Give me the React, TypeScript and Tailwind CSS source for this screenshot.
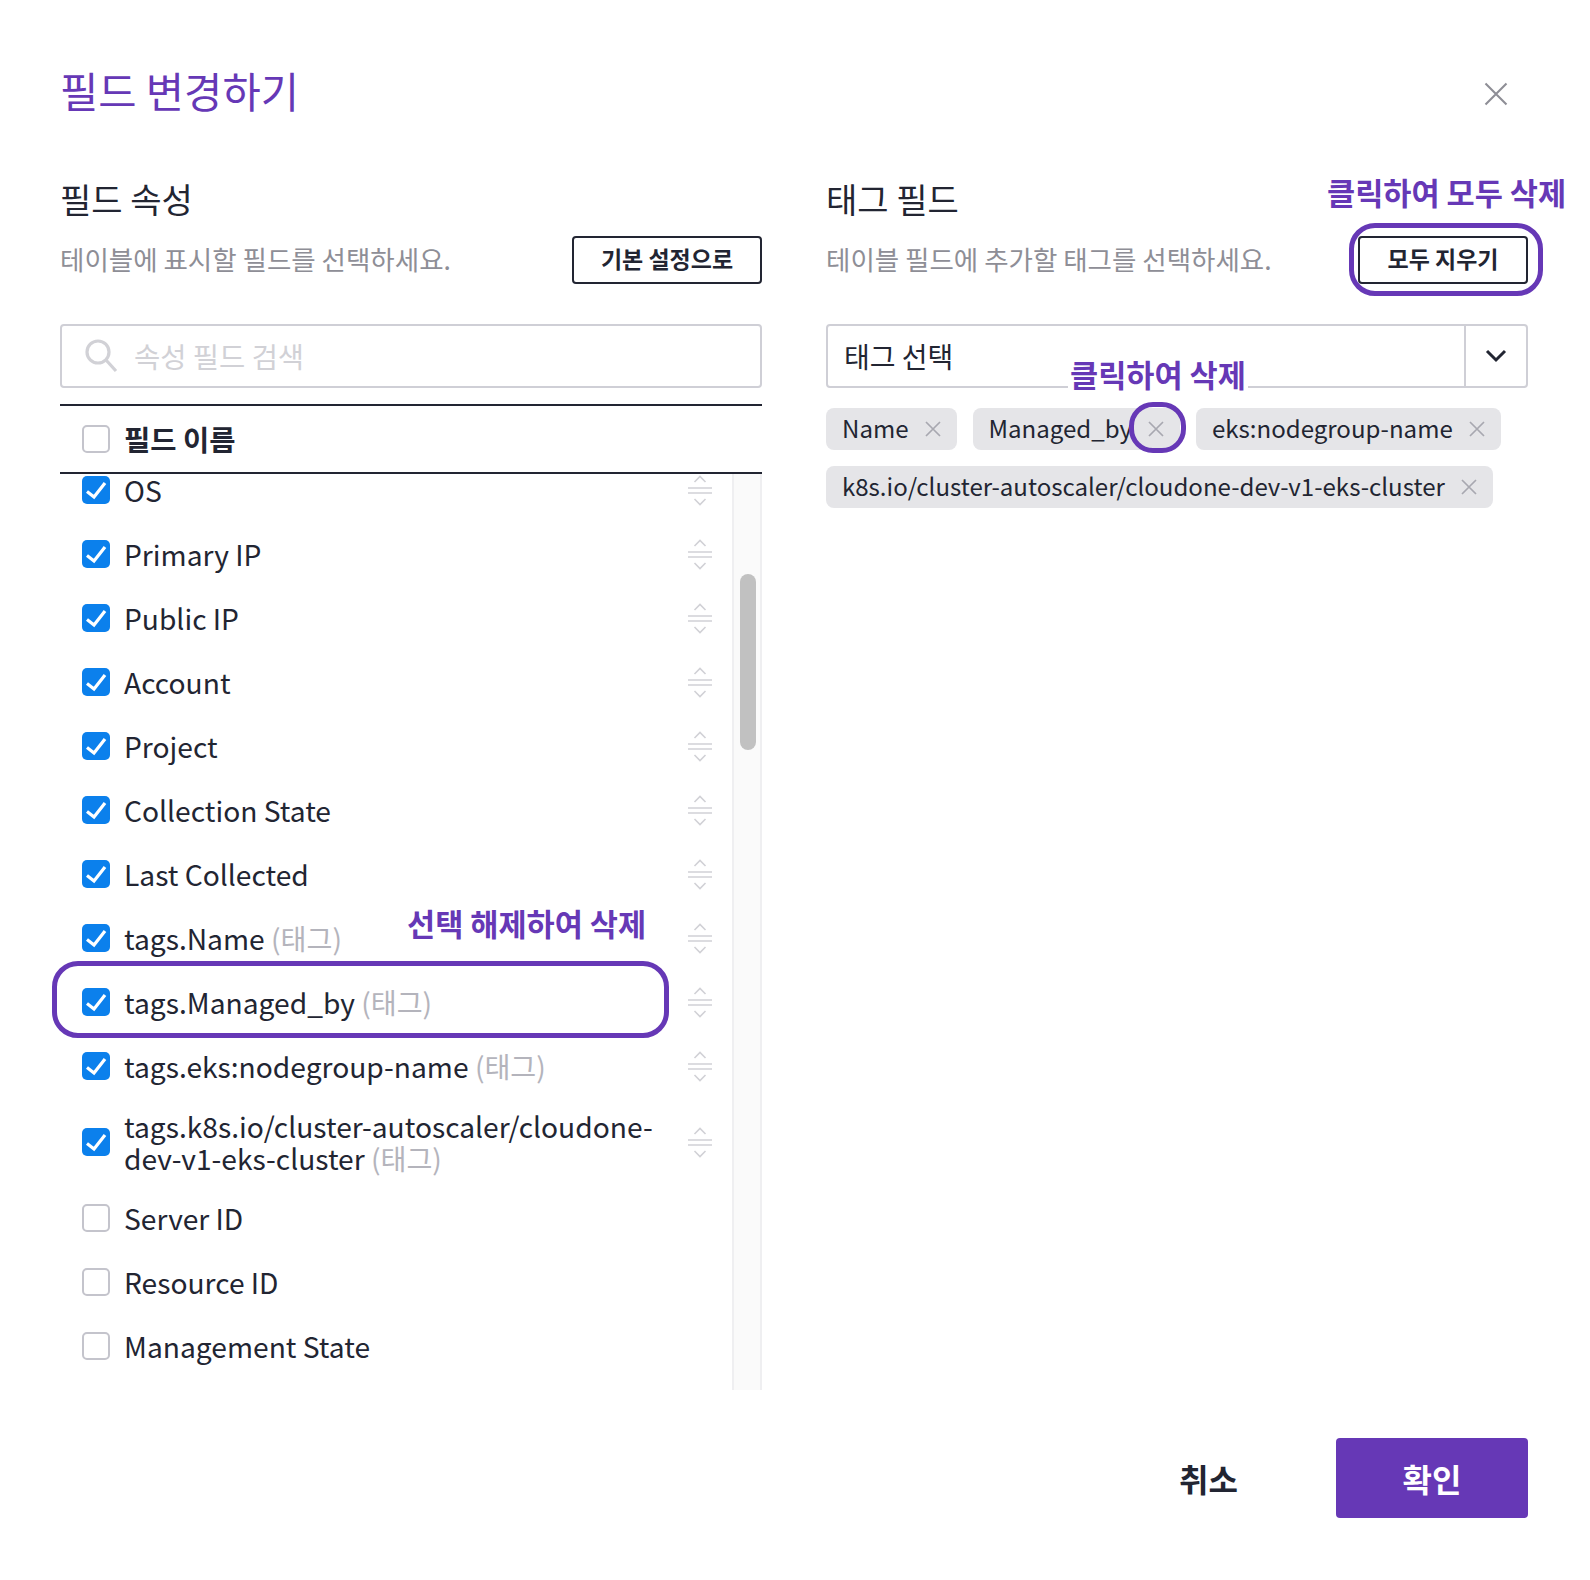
import React from "react";

const FONT = "font-['Noto_Sans_CJK_KR','Noto_Sans',sans-serif]";

type Row = { name: string; tag?: boolean; on: boolean; tall?: boolean };
const rows: Row[] = [
  { name: "OS", on: true },
  { name: "Primary IP", on: true },
  { name: "Public IP", on: true },
  { name: "Account", on: true },
  { name: "Project", on: true },
  { name: "Collection State", on: true },
  { name: "Last Collected", on: true },
  { name: "tags.Name", tag: true, on: true },
  { name: "tags.Managed_by", tag: true, on: true },
  { name: "tags.eks:nodegroup-name", tag: true, on: true },
  { name: "tags.k8s.io/cluster-autoscaler/cloudone-dev-v1-eks-cluster", tag: true, on: true, tall: true },
  { name: "Server ID", on: false },
  { name: "Resource ID", on: false },
  { name: "Management State", on: false },
];

function Check({ on }: { on: boolean }) {
  if (!on) {
    return <span className="block w-[28px] h-[28px] shrink-0 rounded-[5px] border-2 border-[#c4c4cc] bg-white" />;
  }
  return (
    <span className="flex items-center justify-center w-[28px] h-[28px] shrink-0 rounded-[5px] bg-[#0b80ec]">
      <svg width="28" height="28" viewBox="0 0 28 28" fill="none">
        <path d="M5 15.5 L12 21 L23 7" stroke="#fff" strokeWidth="3.2" />
      </svg>
    </span>
  );
}

function Drag() {
  return (
    <svg width="26" height="31" viewBox="0 0 26 31" fill="none" stroke="#d1d1d6" strokeWidth="1.6" className="shrink-0">
      <path d="M7.5 7 L13 1.5 L18.5 7" />
      <path d="M1 13 H25 M1 18 H25" />
      <path d="M7.5 24 L13 29.5 L18.5 24" />
    </svg>
  );
}

function X({ size = 16, color = "#a8a8b0", w = 1.7 }: { size?: number; color?: string; w?: number }) {
  return (
    <svg width={size} height={size} viewBox="0 0 16 16" fill="none" stroke={color} strokeWidth={w} className="shrink-0">
      <path d="M1 1 L15 15 M15 1 L1 15" />
    </svg>
  );
}

function Chip({ label }: { label: string }) {
  return (
    <span className="flex items-center h-[42px] pl-[16px] pr-[16px] gap-[16px] rounded-[8px] bg-[#e5e5e8] text-[24.05px] leading-none text-[#222532] whitespace-nowrap">
      <span className="-mt-[2px]">{label}</span>
      <X />
    </span>
  );
}

const Note = ({ className, children }: { className: string; children: React.ReactNode }) => (
  <span className={`absolute bg-white text-[30.6px] leading-[36px] font-bold text-[#6638b6] whitespace-nowrap ${className}`}>{children}</span>
);

export default function App() {
  return (
    <div className={`relative w-[1590px] h-[1580px] bg-white px-[62px] overflow-hidden text-[#222532] ${FONT}`}>
      <div className="flex items-center justify-between h-[184px]">
        <h1 className="text-[41.6px] leading-[56px] font-normal text-[#6638b6] -mt-[5px] ml-[-2px]">필드 변경하기</h1>
        <span className="pr-[20px] mt-[3px]">
          <X size={24} color="#8e8e96" w={1.4} />
        </span>
      </div>

      <div className="flex justify-between">
        <section className="w-[702px] ml-[-2px]">
          <h2 className="text-[34px] leading-[48px] font-normal -mt-[9px]">필드 속성</h2>
          <div className="flex items-center justify-between mt-[13px] h-[48px]">
            <p className="text-[26.5px] text-[#8e8e96] -mt-[3px]">테이블에 표시할 필드를 선택하세요.</p>
            <button className="w-[190px] h-[48px] pb-[4px] rounded-[4px] border-2 border-[#222532] bg-white text-[23px] font-bold">기본 설정으로</button>
          </div>
          <div className="flex items-center mt-[40px] h-[64px] rounded-[4px] border-2 border-[#cfcfd6] pl-[22px]">
            <svg width="34" height="34" viewBox="0 0 34 34" fill="none" stroke="#d1d1d6" strokeWidth="3.2" className="shrink-0">
              <circle cx="14" cy="13" r="11" />
              <path d="M22 21 L32 32" />
            </svg>
            <span className="ml-[16px] text-[28.5px] text-[#d1d1d6]">속성 필드 검색</span>
          </div>

          <div className="flex items-center mt-[16px] h-[70px] border-y-2 border-[#222532] pl-[22px]">
            <Check on={false} />
            <span className="ml-[14px] text-[28.5px] font-bold">필드 이름</span>
          </div>

          <div className="relative h-[916px] overflow-hidden">
            <div className="-mt-[16px] pr-[29px]">
              {rows.map((r) => (
                <div key={r.name} className={`flex items-center pl-[22px] pr-[20px] ${r.tall ? "h-[88px]" : "h-[64px]"}`}>
                  <Check on={r.on} />
                  <span className="ml-[14px] flex-1 text-[28.2px] leading-[32px] pr-[8px]">
                    {r.name}
                    {r.tag && <span className="text-[#b4b4bc]"> (태그)</span>}
                  </span>
                  {r.on && <Drag />}
                </div>
              ))}
            </div>
            <div className="absolute right-0 top-0 bottom-0 w-[30px] bg-[#fafafa] border-x-2 border-[#efeff1]">
              <div className="absolute left-[6px] top-[100px] w-[16px] h-[176px] rounded-full bg-[#c1c1c1]" />
            </div>
          </div>
        </section>

        <section className="w-[702px]">
          <h2 className="text-[34px] leading-[48px] font-normal -mt-[9px]">태그 필드</h2>
          <div className="flex items-center justify-between mt-[13px] h-[48px]">
            <p className="text-[26.5px] text-[#8e8e96] -mt-[3px]">테이블 필드에 추가할 태그를 선택하세요.</p>
            <button className="w-[170px] h-[48px] pb-[4px] rounded-[4px] border-2 border-[#222532] bg-white text-[23px] font-bold">모두 지우기</button>
          </div>
          <div className="flex items-center mt-[40px] h-[64px] rounded-[4px] border-2 border-[#cfcfd6]">
            <span className="flex-1 pl-[16px] text-[28px]">태그 선택</span>
            <span className="flex items-center justify-center w-[62px] h-full border-l-2 border-[#cfcfd6]">
              <svg width="22" height="14" viewBox="0 0 22 14" fill="none" stroke="#222532" strokeWidth="3">
                <path d="M2 2 L11 11 L20 2" />
              </svg>
            </span>
          </div>
          <div className="flex flex-wrap gap-[16px] mt-[20px]">
            <Chip label="Name" />
            <Chip label="Managed_by" />
            <Chip label="eks:nodegroup-name" />
            <Chip label="k8s.io/cluster-autoscaler/cloudone-dev-v1-eks-cluster" />
          </div>
        </section>
      </div>

      <div className="flex justify-end items-center mt-[48px]">
        <span className="text-[32px] font-bold mr-[98px]">취소</span>
        <button className="w-[192px] h-[80px] rounded-[4px] bg-[#6638b6] text-white text-[32px] font-bold">확인</button>
      </div>

      <div className="absolute left-[52px] top-[961px] w-[617px] h-[77px] rounded-[26px] border-[5px] border-[#6638b6]" />
      <div className="absolute left-[1129px] top-[402px] w-[57px] h-[51px] rounded-[24px] border-[5px] border-[#6638b6]" />
      <div className="absolute left-[1349px] top-[223px] w-[194px] h-[73px] rounded-[26px] border-[5px] border-[#6638b6]" />
      <Note className="left-[406px] top-[905px] px-[1px]">선택 해제하여 삭제</Note>
      <Note className="left-[1068px] top-[356px] px-[2px]">클릭하여 삭제</Note>
      <Note className="left-[1326px] top-[174px] px-[1px]">클릭하여 모두 삭제</Note>
    </div>
  );
}
